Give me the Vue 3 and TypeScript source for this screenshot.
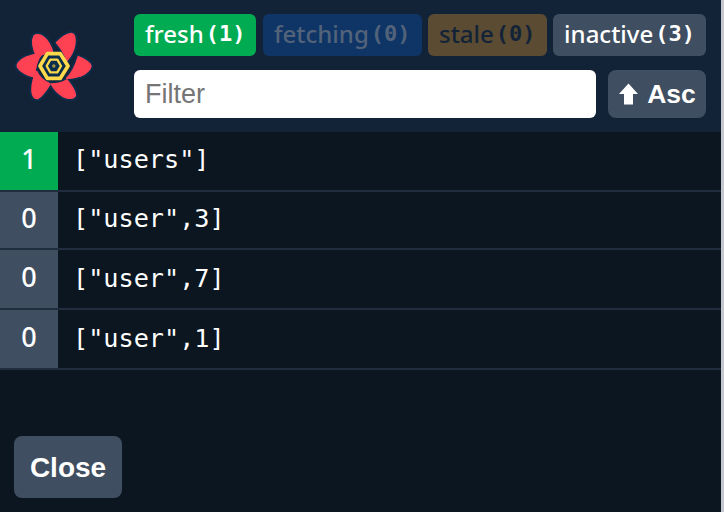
<script setup lang="ts">
interface Tag { label: string; count: number; kind: string }
const tags: Tag[] = [
  { label: 'fresh', count: 1, kind: 'fresh' },
  { label: 'fetching', count: 0, kind: 'fetching' },
  { label: 'stale', count: 0, kind: 'stale' },
  { label: 'inactive', count: 3, kind: 'inactive' },
]
const rows = [
  { n: 1, key: '["users"]', active: true },
  { n: 0, key: '["user",3]', active: false },
  { n: 0, key: '["user",7]', active: false },
  { n: 0, key: '["user",1]', active: false },
]
const petals: string[] = [
  'M66 24 C72 18 84 20 92 25 C106 34 118 56 122 73 C106 73 88 78 75 87 C66 68 58 40 66 24Z',
  'M134 44 C148 30 165 18 178 17 C190 18 190 38 188 50 C185 68 176 85 165 97 C158 78 146 58 134 44Z',
  'M199 86 C215 92 232 104 236 112 C238 122 222 138 205 144 C192 148 178 151 164 151 C182 134 192 110 199 86Z',
  'M89 78 C76 94 68 120 68 147 C48 144 24 130 17 118 C12 106 26 96 42 88 C56 82 72 78 89 78Z',
  'M74 131 C80 146 96 160 114 168 C104 184 90 204 78 211 C66 214 60 200 60 186 C60 166 66 146 74 131Z',
  'M118 168 C134 168 152 164 165 156 C178 172 190 192 190 202 C186 214 168 212 155 206 C140 198 126 184 118 168Z',
]
</script>

<template>
  <div class="page">
    <div class="panel">
      <header class="head">
        <div class="logo">
          <svg width="84" height="76" viewBox="0 0 252 228">
            <g fill="#0a2e4c" stroke="#0a2e4c" stroke-width="16" stroke-linejoin="round">
              <path v-for="p in petals" :key="p" :d="p" />
            </g>
            <g fill="#ff4154" stroke="#ff4154" stroke-width="5" stroke-linejoin="round">
              <path v-for="p in petals" :key="p" :d="p" />
            </g>
            <path d="M106 77 H145 L168 114 L145 151 H106 L84 114 Z" fill="#0a2e4c" stroke="#ffd94c" stroke-width="11" stroke-linejoin="round" />
            <path d="M115 95 H136 L147 114 L136 133 H115 L104 114 Z" fill="none" stroke="#ffd94c" stroke-width="7" stroke-linejoin="round" />
            <circle cx="125.500" cy="114" r="5" fill="#a8954a" />
          </svg>
        </div>
        <div class="controls">
          <div class="tags">
            <span v-for="t in tags" :key="t.label" class="tag" :class="t.kind">
              {{ t.label }}<code class="num">({{ t.count }})</code>
            </span>
          </div>
          <div class="filters">
            <input class="filter" placeholder="Filter" />
            <button class="btn asc">
              <svg width="19" height="22" viewBox="0 0 19 22"><path d="M9.500 0.500 L19 11 H14 V21.500 H5 V11 H0 Z" fill="#fff" /></svg>
              <span>Asc</span>
            </button>
          </div>
        </div>
      </header>
      <div class="list">
        <div v-for="(r, i) in rows" :key="i" class="row">
          <div class="count" :class="{ active: r.active }">{{ r.n }}</div>
          <code class="key">{{ r.key }}</code>
        </div>
      </div>
      <div class="foot">
        <button class="btn close">Close</button>
      </div>
    </div>
    <div class="edge"></div>
  </div>
</template>

<style>
html, body { margin: 0; background: #0b1620; }
</style>

<style scoped>
.page { width: 724px; height: 512px; display: flex; overflow: hidden; }
.edge { flex: 1; background: #c4c8ce; }
.panel {
  width: 721px;
  height: 512px;
  background: #0b1620;
  color: #fff;
  display: flex;
  flex-direction: column;
  font-family: "Liberation Sans", sans-serif;
  overflow: hidden;
}
.head {
  height: 132px;
  box-sizing: border-box;
  background: #132337;
  display: flex;
  align-items: flex-start;
  padding: 14px 15px 0 12px;
}
.logo { width: 122px; padding-top: 14px; flex: none; }
.logo svg { display: block; }
.controls { width: 572px; display: flex; flex-direction: column; gap: 14px; }
.tags { display: flex; justify-content: space-between; }
.tag {
  height: 42px;
  border-radius: 6px;
  box-sizing: border-box;
  padding: 0 11px 3px;
  display: flex;
  align-items: center;
  font-family: "Noto Sans", sans-serif;
  font-size: 24px;
  font-weight: 500;
  white-space: nowrap;
}
.num { font-family: "DejaVu Sans Mono", monospace; font-size: 22px; font-weight: 700; margin-left: 2px; }
.fresh { background: #00ab52; color: #fff; }
.fetching { background: #0f3567; color: #52637a; }
.stale { background: #5a4b32; color: #132337; }
.inactive { background: #3f4e60; color: #fff; }
.filters { display: flex; justify-content: space-between; }
.filter {
  width: 462px;
  height: 48px;
  box-sizing: border-box;
  border: 0;
  border-radius: 6px;
  padding: 0 11px;
  font-family: "Liberation Sans", sans-serif;
  font-size: 27px;
  background: #fff;
  outline: none;
}
.filter::placeholder { color: #757575; opacity: 1; }
.btn {
  border: 0;
  background: #3f4e60;
  color: #fff;
  font-family: "Liberation Sans", sans-serif;
  font-weight: 700;
  font-size: 27px;
  padding: 0;
}
.asc {
  width: 98px;
  height: 48px;
  border-radius: 8px;
  display: flex;
  align-items: center;
  justify-content: center;
  gap: 9px;
  font-size: 26.500px;
  padding-left: 1px;
}
.list { flex: none; }
.row {
  height: 60px;
  box-sizing: border-box;
  border-bottom: 2px solid #1f2d3f;
  display: flex;
}
.row:nth-child(2) { height: 58px; }
.count {
  width: 58px;
  display: flex;
  align-items: center;
  justify-content: center;
  background: #3f4e60;
  font-family: "Noto Sans", sans-serif;
  font-size: 27px;
  font-weight: 500;
  padding-bottom: 6px;
  box-sizing: border-box;
}
.count.active { background: #00ab52; }
.key {
  font-family: "DejaVu Sans Mono", monospace;
  font-size: 25.200px;
  line-height: 57px;
  padding-left: 15px;
  color: #fff;
}
.row:nth-child(1) .key { line-height: 55px; }
.row:nth-child(2) .key { line-height: 53px; }
.foot { flex: 1; display: flex; align-items: flex-end; padding: 0 0 14px 14px; }
.close { width: 108px; height: 62px; border-radius: 8px; font-size: 28px; padding-top: 2px; }
</style>
